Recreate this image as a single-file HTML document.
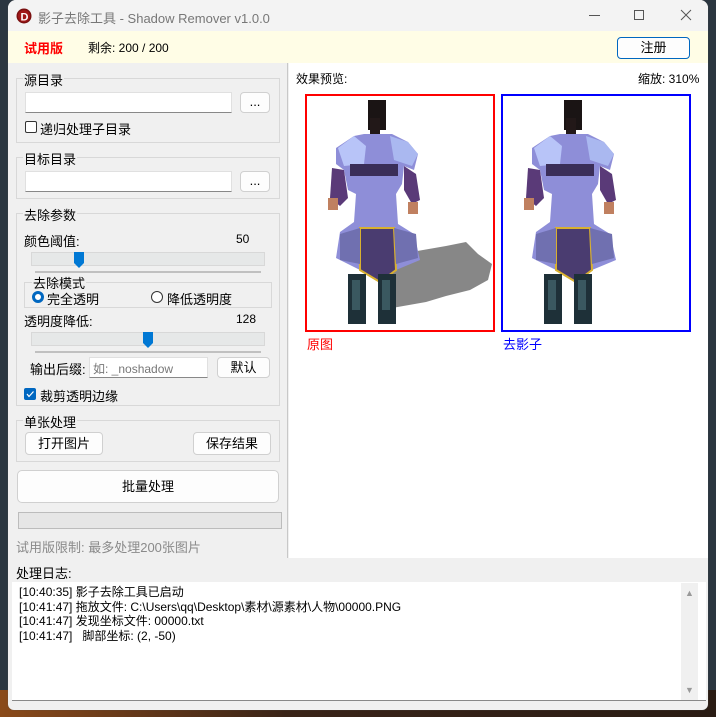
<!DOCTYPE html>
<html><head><meta charset="utf-8"><style>
*{margin:0;padding:0;box-sizing:border-box}
body{width:716px;height:717px;overflow:hidden;background:#2b3640;font-family:"Liberation Sans","Noto Sans CJK SC",sans-serif;font-size:12px;color:#000;position:relative}
.a{position:absolute}
.desk2{left:0;top:690px;width:716px;height:27px;background:linear-gradient(90deg,#8a4a1a,#3a2418 40%,#2a1c14)}
.win{left:8px;top:0;width:700px;height:710px;background:#f0f0f0;border-radius:8px 8px 6px 6px;overflow:hidden;box-shadow:0 0 1px #555}
.grp{border:1px solid #d8d8d8}
.lbl{background:#f0f0f0;padding:0 1px;font-size:13px}
.inp{background:#fff;border:1px solid #e0e0e0;border-bottom:1px solid #888}
.btn{background:#fdfdfd;border:1px solid #d0d0d0;border-radius:4px;text-align:center;font-size:13px}
.t13{font-size:13px}
</style></head><body>
<div class="a desk2"></div>
<div class="a win">
 <div class="a" style="left:0;top:0;width:700px;height:31px;background:#f3f3f3"></div>
 <svg class="a" style="left:8px;top:8px" width="16" height="16"><circle cx="8" cy="8" r="7.5" fill="#7a1010"/><circle cx="8" cy="8" r="6" fill="#a01818"/><text x="4.5" y="12.5" font-size="11" font-weight="bold" fill="#fff" font-family="Liberation Sans">D</text></svg>
 <div class="a t13" style="left:30px;top:8px;color:#777">影子去除工具 - Shadow Remover v1.0.0</div>
 <div class="a" style="left:581px;top:15px;width:11px;height:1px;background:#555"></div>
 <div class="a" style="left:626px;top:10px;width:10px;height:10px;border:1px solid #555"></div>
 <svg class="a" style="left:672px;top:9px" width="12" height="12"><path d="M1 1L11 11M11 1L1 11" stroke="#555" stroke-width="1"/></svg>
 <div class="a" style="left:0;top:31px;width:700px;height:32px;background:#fffde6"></div>
 <div class="a t13" style="left:16px;top:38px;color:#f00;font-weight:bold">试用版</div>
 <div class="a" style="left:80px;top:39px">剩余: 200 / 200</div>
 <div class="a btn" style="left:609px;top:37px;width:73px;height:22px;border-color:#0067c0;line-height:20px">注册</div>

 <div class="a" style="left:0;top:63px;width:280px;height:495px;background:#f0f0f0;border-right:1px solid #c8c8c8"></div>
 <div class="a grp" style="left:8px;top:78px;width:264px;height:65px"></div>
 <div class="a lbl" style="left:15px;top:70px">源目录</div>
 <div class="a inp" style="left:17px;top:92px;width:207px;height:21px"></div>
 <div class="a btn" style="left:232px;top:92px;width:30px;height:21px;line-height:18px">...</div>
 <div class="a" style="left:17px;top:121px;width:12px;height:12px;border:1px solid #333;border-radius:2px;background:#fff"></div>
 <div class="a t13" style="left:32px;top:119px">递归处理子目录</div>

 <div class="a grp" style="left:8px;top:157px;width:264px;height:42px"></div>
 <div class="a lbl" style="left:15px;top:149px">目标目录</div>
 <div class="a inp" style="left:17px;top:171px;width:207px;height:21px"></div>
 <div class="a btn" style="left:232px;top:171px;width:30px;height:21px;line-height:18px">...</div>

 <div class="a grp" style="left:8px;top:213px;width:264px;height:193px"></div>
 <div class="a lbl" style="left:15px;top:205px">去除参数</div>
 <div class="a t13" style="left:16px;top:231px">颜色阈值:</div>
 <div class="a" style="left:228px;top:232px">50</div>
 <div class="a" style="left:23px;top:252px;width:234px;height:14px;background:#e6e8e8;border:1px solid #d8d8d8"></div>
 <svg class="a" style="left:66px;top:252px" width="10" height="16"><path d="M0 0H10V11L5 16L0 11Z" fill="#0078d4"/></svg>
 <div class="a" style="left:27px;top:271px;width:226px;height:2px;background:#c0c0c0"></div>
 <div class="a grp" style="left:16px;top:282px;width:248px;height:26px"></div>
 <div class="a lbl" style="left:24px;top:273px">去除模式</div>
 <div class="a" style="left:24px;top:291px;width:12px;height:12px;border-radius:50%;border:3.5px solid #0067c0;background:#fff"></div>
 <div class="a t13" style="left:39px;top:289px">完全透明</div>
 <div class="a" style="left:143px;top:291px;width:12px;height:12px;border-radius:50%;border:1px solid #333;background:#fff"></div>
 <div class="a t13" style="left:159px;top:289px">降低透明度</div>
 <div class="a t13" style="left:16px;top:311px">透明度降低:</div>
 <div class="a" style="left:228px;top:312px">128</div>
 <div class="a" style="left:23px;top:332px;width:234px;height:14px;background:#e6e8e8;border:1px solid #d8d8d8"></div>
 <svg class="a" style="left:135px;top:332px" width="10" height="16"><path d="M0 0H10V11L5 16L0 11Z" fill="#0078d4"/></svg>
 <div class="a" style="left:27px;top:351px;width:226px;height:2px;background:#c0c0c0"></div>
 <div class="a t13" style="left:22px;top:359px">输出后缀:</div>
 <div class="a inp" style="left:81px;top:357px;width:119px;height:21px;color:#777;padding:2px 3px;font-size:12px">如: _noshadow</div>
 <div class="a btn" style="left:209px;top:357px;width:53px;height:21px;line-height:19px">默认</div>
 <div class="a" style="left:16px;top:388px;width:12px;height:12px;border-radius:2px;background:#0067c0"></div>
 <svg class="a" style="left:16px;top:388px" width="12" height="12"><path d="M3 6L5 8.5L9.5 3.5" stroke="#fff" stroke-width="1.2" fill="none"/></svg>
 <div class="a t13" style="left:32px;top:386px">裁剪透明边缘</div>

 <div class="a grp" style="left:8px;top:420px;width:264px;height:42px"></div>
 <div class="a lbl" style="left:15px;top:412px">单张处理</div>
 <div class="a btn" style="left:17px;top:432px;width:78px;height:23px;line-height:21px">打开图片</div>
 <div class="a btn" style="left:185px;top:432px;width:78px;height:23px;line-height:21px">保存结果</div>
 <div class="a btn" style="left:9px;top:470px;width:262px;height:33px;line-height:31px;border-radius:5px">批量处理</div>
 <div class="a" style="left:10px;top:512px;width:264px;height:17px;background:#e6e6e6;border:1px solid #bcbcbc"></div>
 <div class="a t13" style="left:8px;top:537px;color:#8a8a8a">试用版限制: 最多处理200张图片</div>

 <div class="a" style="left:281px;top:63px;width:419px;height:495px;background:#fff"></div>
 <div class="a" style="left:288px;top:70px">效果预览:</div>
 <div class="a" style="left:630px;top:70px">缩放: 310%</div>
 <svg class="a" style="left:288px;top:94px" width="400" height="240">
  <defs>
   <g id="fig">
    <rect x="64" y="6" width="18" height="30" fill="#1a1414"/>
    <rect x="66" y="24" width="10" height="40" fill="#221818"/>
    <path d="M32 54L50 42L60 40L88 40L104 48L114 60L110 76L100 72L98 90L92 100L94 130L110 140L116 166L92 176L56 176L32 164L36 138L50 128L52 100L44 96L40 76L32 70Z" fill="#8e8ed8"/>
    <path d="M34 54L50 42L62 52L60 70L40 72Z" fill="#b8c4f8"/>
    <path d="M86 42L104 48L114 60L108 72L90 66Z" fill="#aab8f0"/>
    <path d="M28 74L40 76L44 104L36 112L26 104Z" fill="#5a3a78"/>
    <path d="M100 72L112 80L116 106L108 110L100 96Z" fill="#5a3a78"/>
    <rect x="24" y="104" width="10" height="12" fill="#c08060"/>
    <rect x="104" y="108" width="10" height="12" fill="#c08060"/>
    <rect x="46" y="70" width="48" height="12" fill="#3a2e58"/>
    <path d="M56 134L90 134L92 176L76 188L56 176Z" fill="#4a3c70" stroke="#d8b030" stroke-width="2"/>
    <path d="M36 140L56 134L56 170L36 166Z" fill="#7070b0"/>
    <path d="M90 134L112 140L114 164L92 170Z" fill="#7070b0"/>
    <rect x="44" y="180" width="18" height="50" fill="#1e3038"/>
    <rect x="74" y="180" width="18" height="50" fill="#1e3038"/>
    <rect x="48" y="186" width="8" height="30" fill="#3a5860"/>
    <rect x="78" y="186" width="8" height="30" fill="#3a5860"/>
   </g>
  </defs>
  <path d="M104 160L150 152L170 148L182 160L196 170L192 186L174 196L150 202L130 208L96 214L96 180Z" fill="#7a7a7a" opacity="0.9"/>
  <use href="#fig" x="8" y="0"/>
  <rect x="10" y="1" width="188" height="236" fill="none" stroke="#f00" stroke-width="2"/>
  <use href="#fig" x="204" y="0"/>
  <rect x="206" y="1" width="188" height="236" fill="none" stroke="#00f" stroke-width="2"/>
 </svg>
 <div class="a t13" style="left:299px;top:334px;color:#f00">原图</div>
 <div class="a t13" style="left:495px;top:334px;color:#00f">去影子</div>

 <div class="a t13" style="left:8px;top:563px">处理日志:</div>
 <div class="a" style="left:4px;top:582px;width:694px;height:119px;background:#fff;border-bottom:1px solid #888"></div>
 <div class="a" style="left:673px;top:583px;width:17px;height:117px;background:#f0f0f0"></div>
 <div class="a" style="left:677px;top:588px;font-size:9px;color:#999">▲</div>
 <div class="a" style="left:677px;top:685px;font-size:9px;color:#999">▼</div>
 <div class="a" style="left:11px;top:585px;line-height:14.5px;font-size:12px">[10:40:35] 影子去除工具已启动<br>[10:41:47] 拖放文件: C:\Users\qq\Desktop\素材\源素材\人物\00000.PNG<br>[10:41:47] 发现坐标文件: 00000.txt<br>[10:41:47]&nbsp;&nbsp; 脚部坐标: (2, -50)</div>
</div>
</body></html>
